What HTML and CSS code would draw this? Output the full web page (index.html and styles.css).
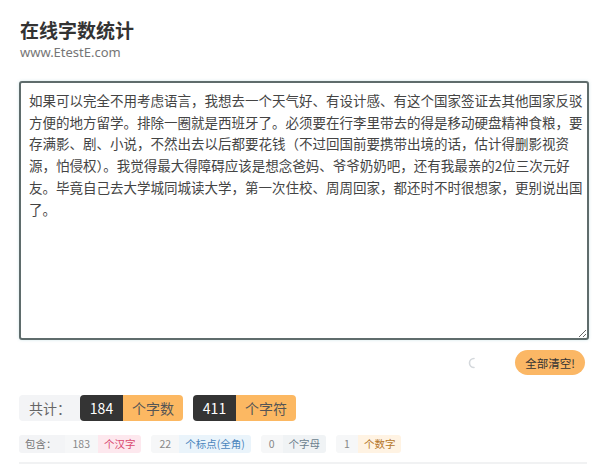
FILE: index.html
```html
<!DOCTYPE html>
<html lang="zh-CN">
<head>
  <meta charset="UTF-8">
  <meta name="viewport" content="width=device-width, initial-scale=1.0">
  <title>在线字数统计</title>
  <link rel="stylesheet" href="styles.css">
</head>
<body>

  <div class="page">
    <!-- 标题 -->
    <div class="head">
      <h1>在线字数统计</h1>
      <div class="site">www.EtestE.com</div>
    </div>

    <textarea class="editor" id="editor">如果可以完全不用考虑语言，我想去一个天气好、有设计感、有这个国家签证去其他国家反驳方便的地方留学。排除一圈就是西班牙了。必须要在行李里带去的得是移动硬盘精神食粮，要存满影、剧、小说，不然出去以后都要花钱（不过回国前要携带出境的话，估计得删影视资源，怕侵权）。我觉得最大得障碍应该是想念爸妈、爷爷奶奶吧，还有我最亲的2位三次元好友。毕竟自己去大学城同城读大学，第一次住校、周周回家，都还时不时很想家，更别说出国了。</textarea>

    <div class="tools">
      <svg class="spinner" width="10" height="14" viewBox="0 0 10 14">
        <path d="M7 2.5 A4.5 4.5 0 0 0 7 11.5" fill="none" stroke="#d4d8dc" stroke-width="1.6" stroke-linecap="round"/>
      </svg>
      <button class="clear-btn">全部清空!</button>
    </div>

    <!-- 统计结果 -->
    <div class="total">
      <span class="label">共计：</span>
      <span class="pair"><span class="num">184</span><span class="unit">个字数</span></span>
      <span class="pair"><span class="num">411</span><span class="unit">个字符</span></span>
    </div>

    <div class="detail">
      <span class="tag"><span class="k">包含：</span><span class="v">183</span><span class="t pink">个汉字</span></span>
      <span class="tag"><span class="v">22</span><span class="t blue">个标点(全角)</span></span>
      <span class="tag"><span class="v">0</span><span class="t gray">个字母</span></span>
      <span class="tag"><span class="v">1</span><span class="t orange">个数字</span></span>
    </div>

    <div class="line"></div>
  </div>

</body>
</html>
```

FILE: styles.css
```css
body {
  margin: 0;
  padding: 0;
  background: #fff;
  font-family: "Noto Sans", "Noto Sans CJK SC", sans-serif;
  color: #333;
}

.page {
  padding: 0 11px 0 19px;
}

.head {
  padding-top: 17px;
  padding-left: 1px;
}

.head h1 {
  margin: 0;
  font-family: "Noto Sans CJK SC", sans-serif;
  font-size: 19px;
  font-weight: bold;
  line-height: 26px;
  color: #333;
}

.head .site {
  font-size: 13px;
  line-height: 18px;
  color: #767676;
}

.editor {
  display: block;
  box-sizing: border-box;
  width: 570px;
  height: 259px;
  margin-top: 20px;
  padding: 7px 4px 7px 8px;
  border: 2px solid #5f6c6c;
  border-radius: 3px;
  box-shadow: 0 0 3px rgba(120, 180, 190, 0.35);
  font-family: "Noto Sans CJK SC", sans-serif;
  font-size: 13.5px;
  line-height: 21.7px;
  color: #444;
  resize: both;
  outline: none;
}

.tools {
  display: flex;
  justify-content: flex-end;
  align-items: center;
  gap: 38px;
  margin-top: 10px;
  padding-right: 4px;
}

.spinner {
  display: block;
}

.clear-btn {
  height: 25px;
  padding: 0 10px;
  border: none;
  border-radius: 13px;
  background-color: #fbb765;
  color: #333;
  font-family: "Noto Sans CJK SC", sans-serif;
  font-size: 11.5px;
  cursor: pointer;
}

.total {
  display: flex;
  gap: 10px;
  margin-top: 20px;
  font-family: "Noto Sans CJK SC", sans-serif;
  font-size: 14px;
}

.total .label {
  width: 61px;
  height: 26px;
  line-height: 26px;
  box-sizing: border-box;
  padding-left: 10px;
  margin-right: -10px;
  background: #f3f4f6;
  border-radius: 4px 0 0 4px;
  color: #666;
}

.pair {
  display: flex;
  height: 26px;
  line-height: 26px;
  border-radius: 4px;
  overflow: hidden;
}

.pair .num {
  width: 43px;
  text-align: center;
  background: #343434;
  color: #fff;
}

.pair .unit {
  width: 60px;
  text-align: center;
  background: #fcb862;
  color: #555;
}

.detail {
  display: flex;
  gap: 10px;
  margin-top: 14px;
  font-family: "Noto Sans CJK SC", sans-serif;
  font-size: 10.5px;
}

.tag {
  display: flex;
  height: 18px;
  line-height: 18px;
  border-radius: 3px;
  overflow: hidden;
}

.tag .k {
  padding: 0 8px 0 6px;
  background: #f3f4f6;
  color: #777;
}

.tag .v {
  padding: 0 8px;
  background: #f6f7f8;
  color: #888;
}

.tag .t {
  padding: 0 6px;
}

.pink {
  background: #fde8ee;
  color: #d9486e;
}

.blue {
  background: #eaf4fb;
  color: #4a86bd;
}

.gray {
  background: #f0f3f5;
  color: #6b7f8e;
}

.orange {
  background: #fff3e3;
  color: #b5762a;
}

.line {
  height: 2px;
  margin-top: 9px;
  width: 568px;
  background: #f1f2f3;
}
```
